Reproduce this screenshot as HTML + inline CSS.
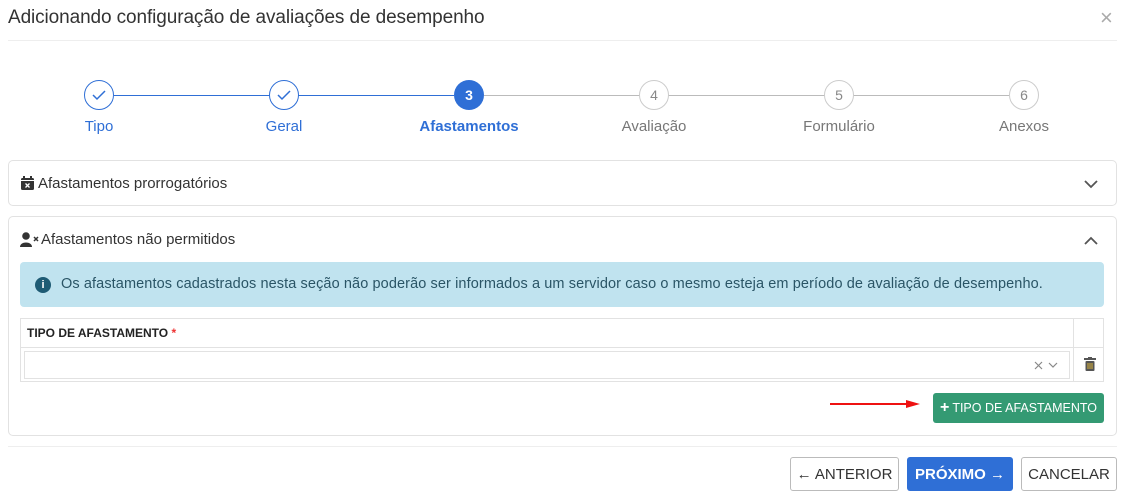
<!DOCTYPE html>
<html><head><meta charset="utf-8"><style>
*{box-sizing:border-box;margin:0;padding:0}
body{width:1125px;height:497px;background:#fff;font-family:"Liberation Sans",sans-serif;color:#333;position:relative;overflow:hidden}
.a{position:absolute}
.c{position:absolute;width:30px;height:30px;border-radius:50%;top:80px;font-size:14px;text-align:center;line-height:28px}
.lb{position:absolute;top:118px;width:160px;text-align:center;font-size:15px}
.btn{position:absolute;top:457px;height:34px;border-radius:3px;font-size:15px;display:flex;align-items:center;justify-content:center}
</style></head><body>
<div class="a" style="left:8px;top:7px;font-size:19px;color:#333;letter-spacing:-0.1px">Adicionando configuração de avaliações de desempenho</div>
<div class="a" style="left:1100px;top:5px;font-size:22px;color:#aaa">×</div>
<div class="a" style="left:8px;top:40px;width:1109px;height:1px;background:#eee"></div>

<div class="a" style="left:114px;top:95px;width:340px;height:1px;background:#2f6fd6"></div>
<div class="a" style="left:484px;top:95px;width:525px;height:1px;background:#bbb"></div>
<div class="c" style="left:84px;border:1.5px solid #2f6fd6;background:#fff"><svg width="14" height="12" style="margin-top:8px"><path d="M1 6l4 4 8-8" stroke="#2f6fd6" stroke-width="1.5" fill="none"/></svg></div>
<div class="c" style="left:269px;border:1.5px solid #2f6fd6;background:#fff"><svg width="14" height="12" style="margin-top:8px"><path d="M1 6l4 4 8-8" stroke="#2f6fd6" stroke-width="1.5" fill="none"/></svg></div>
<div class="c" style="left:454px;background:#2f6fd6;color:#fff;font-weight:bold;line-height:30px">3</div>
<div class="c" style="left:639px;border:1.5px solid #ccc;background:#fff;color:#888">4</div>
<div class="c" style="left:824px;border:1.5px solid #ccc;background:#fff;color:#888">5</div>
<div class="c" style="left:1009px;border:1.5px solid #ccc;background:#fff;color:#888">6</div>
<div class="lb" style="left:19px;color:#2f6fd6">Tipo</div>
<div class="lb" style="left:204px;color:#2f6fd6">Geral</div>
<div class="lb" style="left:389px;color:#2f6fd6;font-weight:bold">Afastamentos</div>
<div class="lb" style="left:574px;color:#777">Avaliação</div>
<div class="lb" style="left:759px;color:#777">Formulário</div>
<div class="lb" style="left:944px;color:#777">Anexos</div>

<div class="a" style="left:8px;top:160px;width:1109px;height:46px;border:1px solid #e2e2e2;border-radius:5px"></div>
<svg class="a" style="left:21px;top:176px" width="13" height="14"><rect x="0" y="2" width="13" height="12" rx="1.5" fill="#333"/><rect x="2" y="0" width="2" height="3" fill="#333"/><rect x="9" y="0" width="2" height="3" fill="#333"/><rect x="0" y="4" width="13" height="1" fill="#fff"/><path d="M4.5 7.5l4 4M8.5 7.5l-4 4" stroke="#fff" stroke-width="1.3"/></svg>
<div class="a" style="left:38px;top:175px;font-size:15px">Afastamentos prorrogatórios</div>
<svg class="a" style="left:1084px;top:179px" width="14" height="10"><path d="M1 2l6 6 6-6" stroke="#555" stroke-width="1.8" fill="none"/></svg>

<div class="a" style="left:8px;top:216px;width:1109px;height:220px;border:1px solid #e2e2e2;border-radius:5px"></div>
<svg class="a" style="left:20px;top:232px" width="20" height="16"><circle cx="6" cy="4" r="3.8" fill="#333"/><path d="M0 15c0-6 12-6 12 0z" fill="#333"/><path d="M14 5l4 4M18 5l-4 4" stroke="#333" stroke-width="1.5"/></svg>
<div class="a" style="left:41px;top:231px;font-size:15px">Afastamentos não permitidos</div>
<svg class="a" style="left:1084px;top:236px" width="14" height="10"><path d="M1 8l6-6 6 6" stroke="#555" stroke-width="1.8" fill="none"/></svg>

<div class="a" style="left:20px;top:262px;width:1084px;height:45px;background:#c0e3ef;border-radius:4px"></div>
<div class="a" style="left:35px;top:277px;width:16px;height:16px;border-radius:50%;background:#1e5b74;color:#fff;font-size:11px;font-weight:bold;text-align:center;line-height:16px">i</div>
<div class="a" style="left:61px;top:276px;font-size:14.5px;color:#2a5566;letter-spacing:0.1px">Os afastamentos cadastrados nesta seção não poderão ser informados a um servidor caso o mesmo esteja em período de avaliação de desempenho.</div>

<div class="a" style="left:20px;top:318px;width:1084px;height:64px;border:1px solid #e2e2e2"></div>
<div class="a" style="left:20px;top:347px;width:1084px;height:1px;background:#e2e2e2"></div>
<div class="a" style="left:1073px;top:318px;width:1px;height:64px;background:#e2e2e2"></div>
<div class="a" style="left:27px;top:326px;font-size:12px;font-weight:bold;color:#222">TIPO DE AFASTAMENTO <span style="color:#e33">*</span></div>
<div class="a" style="left:24px;top:351px;width:1046px;height:28px;border:1px solid #e2e2e2"></div>
<svg class="a" style="left:1034px;top:361px" width="9" height="9"><path d="M1 1l7 7M8 1l-7 7" stroke="#888" stroke-width="1.2"/></svg>
<svg class="a" style="left:1048px;top:362px" width="10" height="7"><path d="M1 1l4 4 4-4" stroke="#888" stroke-width="1.2" fill="none"/></svg>
<svg class="a" style="left:1084px;top:357px" width="12" height="14"><rect x="0" y="1" width="12" height="2" fill="#555"/><rect x="4" y="0" width="4" height="2" fill="#555"/><rect x="1.5" y="4" width="9" height="10" rx="1" fill="#555"/><path d="M4 6v6M6 6v6M8 6v6" stroke="#d9b23c" stroke-width="1"/></svg>

<svg class="a" style="left:828px;top:398px" width="96" height="12"><path d="M2 6L80 6" stroke="#e11" stroke-width="2"/><path d="M78 2l14 4-14 4z" fill="#e11"/></svg>
<div class="a" style="left:933px;top:393px;width:171px;height:30px;background:#349a73;border-radius:3px;color:#fff;font-size:12.5px;display:flex;align-items:center;justify-content:center"><b style="font-size:16px;margin-right:3px">+</b>TIPO DE AFASTAMENTO</div>

<div class="a" style="left:8px;top:446px;width:1109px;height:1px;background:#eee"></div>
<div class="btn" style="left:790px;width:109px;border:1px solid #bbb;color:#333">← ANTERIOR</div>
<div class="btn" style="left:907px;width:106px;background:#2f6fd6;color:#fff;font-weight:bold">PRÓXIMO →</div>
<div class="btn" style="left:1021px;width:96px;border:1px solid #bbb;color:#333">CANCELAR</div>
</body></html>
